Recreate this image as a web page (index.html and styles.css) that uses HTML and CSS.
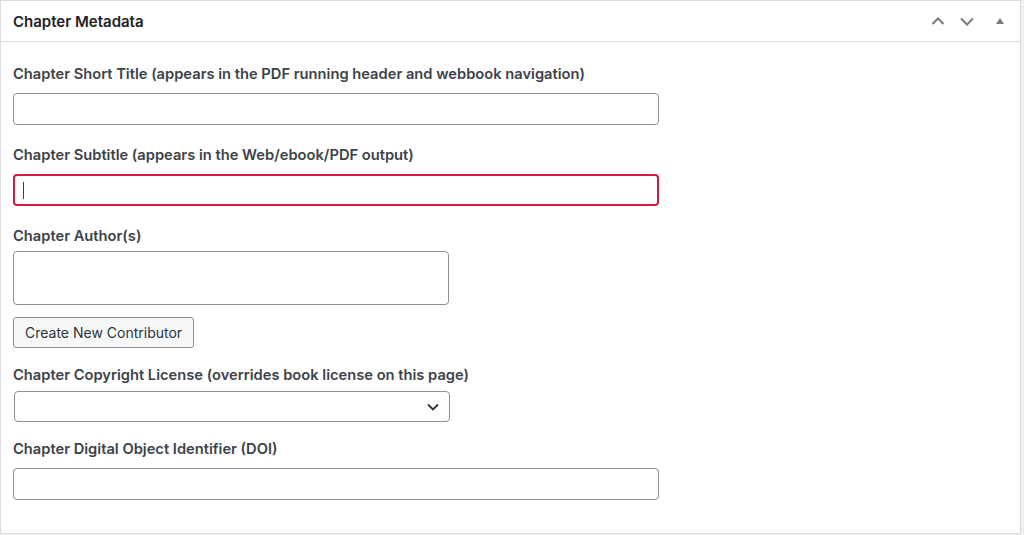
FILE: index.html
```html
<!DOCTYPE html>
<html>
<head>
<meta charset="utf-8">
<title>Chapter Metadata</title>
<link rel="stylesheet" href="styles.css">
</head>
<body>

<div class="postbox">
	<div class="postbox-header">
		<h2 class="hndle">Chapter Metadata</h2>
		<div class="handle-actions">
			<span class="handle-btn">
				<svg width="16" height="16" viewBox="0 0 16 16"><path d="M2.5 11 L8 5.5 L13.5 11" fill="none" stroke="#787c82" stroke-width="2"/></svg>
			</span>
			<span class="handle-btn">
				<svg width="16" height="16" viewBox="0 0 16 16"><path d="M2 5.5 L8 11.5 L14 5.5" fill="none" stroke="#787c82" stroke-width="2"/></svg>
			</span>
			<span class="handle-btn toggle">
				<svg width="10" height="10" viewBox="0 0 10 10"><path d="M1 8 L5 2 L9 8 Z" fill="#787c82"/></svg>
			</span>
		</div>
	</div>
	<div class="inside">
		<div class="field">
			<label class="field-label">Chapter Short Title (appears in the PDF running header and webbook navigation)</label>
			<div class="text-input wide"></div>
		</div>
		<div class="field">
			<label class="field-label">Chapter Subtitle (appears in the Web/ebook/PDF output)</label>
			<div class="text-input wide focused"><span class="caret"></span></div>
		</div>
		<div class="field authors">
			<label class="field-label">Chapter Author(s)</label>
			<div class="text-input narrow tall"></div>
			<button class="button">Create New Contributor</button>
		</div>
		<div class="field license">
			<label class="field-label">Chapter Copyright License (overrides book license on this page)</label>
			<div class="text-input narrow select">
				<svg width="12" height="8" viewBox="0 0 12 8"><path d="M1 1.5 L6 6.5 L11 1.5" fill="none" stroke="#2c3338" stroke-width="1.8"/></svg>
			</div>
		</div>
		<div class="field">
			<label class="field-label">Chapter Digital Object Identifier (DOI)</label>
			<div class="text-input wide"></div>
		</div>
	</div>
</div>

</body>
</html>
```

FILE: styles.css
```css
body {
    margin: 0;
    background-color: #f0f0f1;
    font-family: Inter, "Noto Sans", sans-serif;
    font-size: 14px;
    color: #1d2327;
}
.postbox {
    width: 1019px;
    height: 532px;
    background-color: #fff;
    border: 1px solid #dcdcde;
}
.postbox-header {
    display: flex;
    align-items: center;
    justify-content: space-between;
    height: 40px;
    border-bottom: 1px solid #dcdcde;
}
.hndle {
    margin: 0;
    padding: 2px 0 0 12px;
    font-size: 15px;
    font-weight: 600;
    line-height: 20px;
}
.handle-actions {
    display: flex;
    align-items: center;
    padding-right: 9px;
}
.handle-btn {
    display: flex;
    align-items: center;
    justify-content: center;
    width: 29px;
    height: 36px;
}
.handle-btn.toggle {
    width: 22px;
    margin-left: 8px;
}
.inside {
    padding: 22px 12px 0;
}
.field {
    display: flex;
    flex-direction: column;
    align-items: flex-start;
    margin-bottom: 20px;
}
.field-label {
    display: block;
    font-size: 14.7px;
    font-weight: 600;
    line-height: 20px;
    color: #3c434a;
    margin-bottom: 9px;
}
.text-input {
    box-sizing: border-box;
    height: 32px;
    border: 1px solid #8c8f94;
    border-radius: 4px;
    background-color: #fff;
}
.wide {
    width: 646px;
}
.narrow {
    width: 436px;
}
.tall {
    height: 54px;
}
.focused {
    border: 2px solid #d7193f;
    display: flex;
    align-items: center;
    padding-left: 8px;
}
.caret {
    width: 1px;
    height: 17px;
    background-color: #3c434a;
}
.authors {
    margin-bottom: 17px;
}
.authors .field-label {
    margin-bottom: 5px;
}
.button {
    margin-top: 12px;
    height: 31px;
    padding: 0 11px;
    font-family: inherit;
    font-size: 14px;
    color: #2c3338;
    background-color: #f6f7f7;
    border: 1px solid #8c8f94;
    border-radius: 3px;
}
.license {
    margin-bottom: 17px;
}
.license .field-label {
    margin-bottom: 6px;
}
.select {
    margin-left: 1px;
    height: 31px;
    display: flex;
    align-items: center;
    justify-content: flex-end;
    padding-right: 10px;
}
```
